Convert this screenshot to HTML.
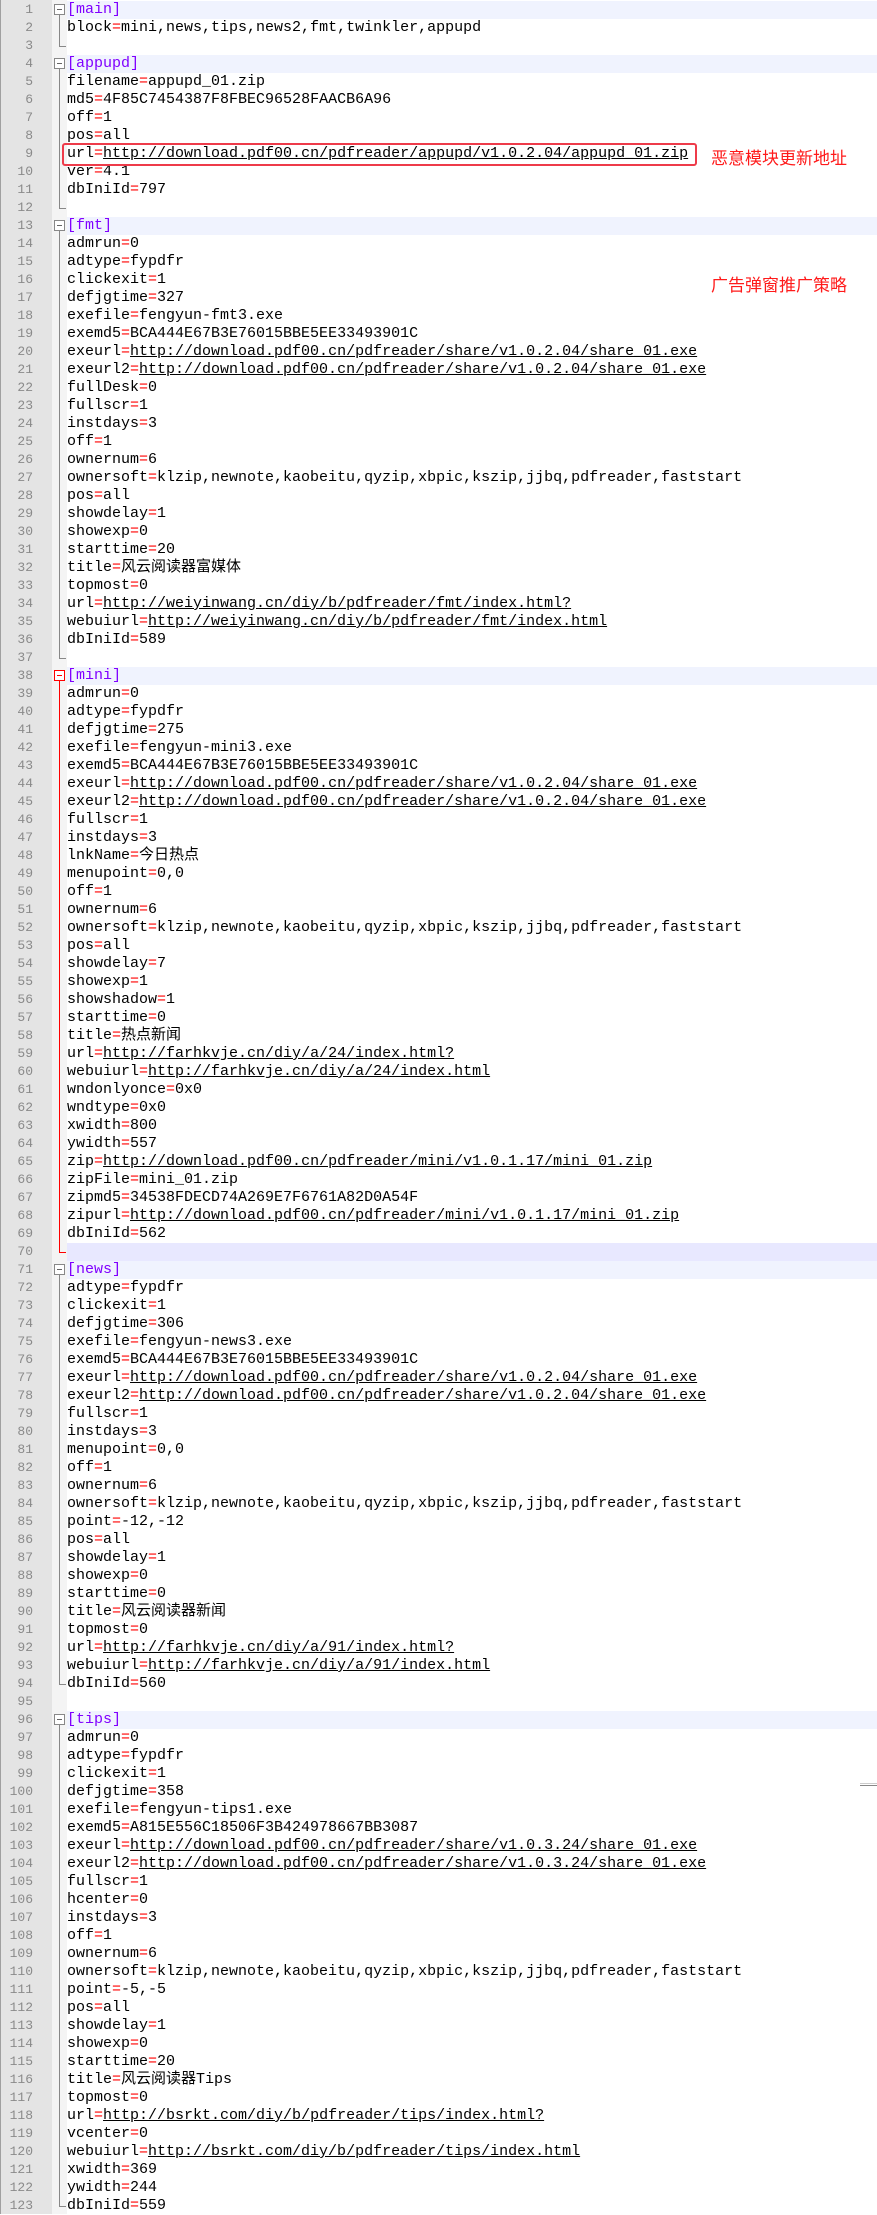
<!DOCTYPE html>
<html><head><meta charset="utf-8">
<style>
html,body{margin:0;padding:0;background:#fff;}
body{width:877px;height:2214px;position:relative;overflow:hidden;}
#gut{position:absolute;left:0;top:0;width:52px;height:2214px;background:#e4e4e4;border-left:1px solid #a0a0a0;box-sizing:border-box;}
#fold{position:absolute;left:52px;top:0;width:15px;height:2214px;background:#f4f4f4;}
#nums{position:absolute;left:0;top:1px;width:33px;margin:0;font:13px/18px "Liberation Mono",monospace;color:#8a8a8a;text-align:right;white-space:pre;}
#code{position:absolute;left:67px;top:1px;width:810px;}
.l{height:18px;line-height:18px;font:15px/18px "Liberation Mono","Noto Sans CJK SC",monospace;color:#000;white-space:pre;}
.h{background:#f0f3fe;color:#8000ff;}
.c{background:#e8e8ff;}
.l b{font-weight:normal;color:#f00;}
.l u{text-decoration:underline;}
.fb{position:absolute;left:54px;width:9px;height:9px;border:1px solid #888;background:#fff;}
.fb:after{content:"";position:absolute;left:2px;top:4px;width:5px;height:1px;background:#666;}
.fv{position:absolute;left:59px;width:1px;background:#888;}
.fe{position:absolute;left:59px;width:7px;height:1px;background:#888;}
.red .fb{border-color:#f00;} .red .fb:after{background:#f00;}
.red .fv,.red .fe{background:#f00;}
.note{position:absolute;left:711px;font:17px/20px "Noto Sans CJK SC","WenQuanYi Zen Hei",sans-serif;color:#ff1a1a;}
#box{position:absolute;left:62px;top:143px;width:631px;height:19px;border:2px solid #ee3b4a;border-radius:3px;}
</style></head><body>
<div id="gut"></div><div id="fold"></div>
<pre id="nums">1
2
3
4
5
6
7
8
9
10
11
12
13
14
15
16
17
18
19
20
21
22
23
24
25
26
27
28
29
30
31
32
33
34
35
36
37
38
39
40
41
42
43
44
45
46
47
48
49
50
51
52
53
54
55
56
57
58
59
60
61
62
63
64
65
66
67
68
69
70
71
72
73
74
75
76
77
78
79
80
81
82
83
84
85
86
87
88
89
90
91
92
93
94
95
96
97
98
99
100
101
102
103
104
105
106
107
108
109
110
111
112
113
114
115
116
117
118
119
120
121
122
123</pre>

<div id="code">
<div class="l h">[main]</div>
<div class="l">block<b>=</b>mini,news,tips,news2,fmt,twinkler,appupd</div>
<div class="l"></div>
<div class="l h">[appupd]</div>
<div class="l">filename<b>=</b>appupd_01.zip</div>
<div class="l">md5<b>=</b>4F85C7454387F8FBEC96528FAACB6A96</div>
<div class="l">off<b>=</b>1</div>
<div class="l">pos<b>=</b>all</div>
<div class="l">url<b>=</b><u>http://download.pdf00.cn/pdfreader/appupd/v1.0.2.04/appupd_01.zip</u></div>
<div class="l">ver<b>=</b>4.1</div>
<div class="l">dbIniId<b>=</b>797</div>
<div class="l"></div>
<div class="l h">[fmt]</div>
<div class="l">admrun<b>=</b>0</div>
<div class="l">adtype<b>=</b>fypdfr</div>
<div class="l">clickexit<b>=</b>1</div>
<div class="l">defjgtime<b>=</b>327</div>
<div class="l">exefile<b>=</b>fengyun-fmt3.exe</div>
<div class="l">exemd5<b>=</b>BCA444E67B3E76015BBE5EE33493901C</div>
<div class="l">exeurl<b>=</b><u>http://download.pdf00.cn/pdfreader/share/v1.0.2.04/share_01.exe</u></div>
<div class="l">exeurl2<b>=</b><u>http://download.pdf00.cn/pdfreader/share/v1.0.2.04/share_01.exe</u></div>
<div class="l">fullDesk<b>=</b>0</div>
<div class="l">fullscr<b>=</b>1</div>
<div class="l">instdays<b>=</b>3</div>
<div class="l">off<b>=</b>1</div>
<div class="l">ownernum<b>=</b>6</div>
<div class="l">ownersoft<b>=</b>klzip,newnote,kaobeitu,qyzip,xbpic,kszip,jjbq,pdfreader,faststart</div>
<div class="l">pos<b>=</b>all</div>
<div class="l">showdelay<b>=</b>1</div>
<div class="l">showexp<b>=</b>0</div>
<div class="l">starttime<b>=</b>20</div>
<div class="l">title<b>=</b>风云阅读器富媒体</div>
<div class="l">topmost<b>=</b>0</div>
<div class="l">url<b>=</b><u>http://weiyinwang.cn/diy/b/pdfreader/fmt/index.html?</u></div>
<div class="l">webuiurl<b>=</b><u>http://weiyinwang.cn/diy/b/pdfreader/fmt/index.html</u></div>
<div class="l">dbIniId<b>=</b>589</div>
<div class="l"></div>
<div class="l h">[mini]</div>
<div class="l">admrun<b>=</b>0</div>
<div class="l">adtype<b>=</b>fypdfr</div>
<div class="l">defjgtime<b>=</b>275</div>
<div class="l">exefile<b>=</b>fengyun-mini3.exe</div>
<div class="l">exemd5<b>=</b>BCA444E67B3E76015BBE5EE33493901C</div>
<div class="l">exeurl<b>=</b><u>http://download.pdf00.cn/pdfreader/share/v1.0.2.04/share_01.exe</u></div>
<div class="l">exeurl2<b>=</b><u>http://download.pdf00.cn/pdfreader/share/v1.0.2.04/share_01.exe</u></div>
<div class="l">fullscr<b>=</b>1</div>
<div class="l">instdays<b>=</b>3</div>
<div class="l">lnkName<b>=</b>今日热点</div>
<div class="l">menupoint<b>=</b>0,0</div>
<div class="l">off<b>=</b>1</div>
<div class="l">ownernum<b>=</b>6</div>
<div class="l">ownersoft<b>=</b>klzip,newnote,kaobeitu,qyzip,xbpic,kszip,jjbq,pdfreader,faststart</div>
<div class="l">pos<b>=</b>all</div>
<div class="l">showdelay<b>=</b>7</div>
<div class="l">showexp<b>=</b>1</div>
<div class="l">showshadow<b>=</b>1</div>
<div class="l">starttime<b>=</b>0</div>
<div class="l">title<b>=</b>热点新闻</div>
<div class="l">url<b>=</b><u>http://farhkvje.cn/diy/a/24/index.html?</u></div>
<div class="l">webuiurl<b>=</b><u>http://farhkvje.cn/diy/a/24/index.html</u></div>
<div class="l">wndonlyonce<b>=</b>0x0</div>
<div class="l">wndtype<b>=</b>0x0</div>
<div class="l">xwidth<b>=</b>800</div>
<div class="l">ywidth<b>=</b>557</div>
<div class="l">zip<b>=</b><u>http://download.pdf00.cn/pdfreader/mini/v1.0.1.17/mini_01.zip</u></div>
<div class="l">zipFile<b>=</b>mini_01.zip</div>
<div class="l">zipmd5<b>=</b>34538FDECD74A269E7F6761A82D0A54F</div>
<div class="l">zipurl<b>=</b><u>http://download.pdf00.cn/pdfreader/mini/v1.0.1.17/mini_01.zip</u></div>
<div class="l">dbIniId<b>=</b>562</div>
<div class="l c"></div>
<div class="l h">[news]</div>
<div class="l">adtype<b>=</b>fypdfr</div>
<div class="l">clickexit<b>=</b>1</div>
<div class="l">defjgtime<b>=</b>306</div>
<div class="l">exefile<b>=</b>fengyun-news3.exe</div>
<div class="l">exemd5<b>=</b>BCA444E67B3E76015BBE5EE33493901C</div>
<div class="l">exeurl<b>=</b><u>http://download.pdf00.cn/pdfreader/share/v1.0.2.04/share_01.exe</u></div>
<div class="l">exeurl2<b>=</b><u>http://download.pdf00.cn/pdfreader/share/v1.0.2.04/share_01.exe</u></div>
<div class="l">fullscr<b>=</b>1</div>
<div class="l">instdays<b>=</b>3</div>
<div class="l">menupoint<b>=</b>0,0</div>
<div class="l">off<b>=</b>1</div>
<div class="l">ownernum<b>=</b>6</div>
<div class="l">ownersoft<b>=</b>klzip,newnote,kaobeitu,qyzip,xbpic,kszip,jjbq,pdfreader,faststart</div>
<div class="l">point<b>=</b>-12,-12</div>
<div class="l">pos<b>=</b>all</div>
<div class="l">showdelay<b>=</b>1</div>
<div class="l">showexp<b>=</b>0</div>
<div class="l">starttime<b>=</b>0</div>
<div class="l">title<b>=</b>风云阅读器新闻</div>
<div class="l">topmost<b>=</b>0</div>
<div class="l">url<b>=</b><u>http://farhkvje.cn/diy/a/91/index.html?</u></div>
<div class="l">webuiurl<b>=</b><u>http://farhkvje.cn/diy/a/91/index.html</u></div>
<div class="l">dbIniId<b>=</b>560</div>
<div class="l"></div>
<div class="l h">[tips]</div>
<div class="l">admrun<b>=</b>0</div>
<div class="l">adtype<b>=</b>fypdfr</div>
<div class="l">clickexit<b>=</b>1</div>
<div class="l">defjgtime<b>=</b>358</div>
<div class="l">exefile<b>=</b>fengyun-tips1.exe</div>
<div class="l">exemd5<b>=</b>A815E556C18506F3B424978667BB3087</div>
<div class="l">exeurl<b>=</b><u>http://download.pdf00.cn/pdfreader/share/v1.0.3.24/share_01.exe</u></div>
<div class="l">exeurl2<b>=</b><u>http://download.pdf00.cn/pdfreader/share/v1.0.3.24/share_01.exe</u></div>
<div class="l">fullscr<b>=</b>1</div>
<div class="l">hcenter<b>=</b>0</div>
<div class="l">instdays<b>=</b>3</div>
<div class="l">off<b>=</b>1</div>
<div class="l">ownernum<b>=</b>6</div>
<div class="l">ownersoft<b>=</b>klzip,newnote,kaobeitu,qyzip,xbpic,kszip,jjbq,pdfreader,faststart</div>
<div class="l">point<b>=</b>-5,-5</div>
<div class="l">pos<b>=</b>all</div>
<div class="l">showdelay<b>=</b>1</div>
<div class="l">showexp<b>=</b>0</div>
<div class="l">starttime<b>=</b>20</div>
<div class="l">title<b>=</b>风云阅读器Tips</div>
<div class="l">topmost<b>=</b>0</div>
<div class="l">url<b>=</b><u>http://bsrkt.com/diy/b/pdfreader/tips/index.html?</u></div>
<div class="l">vcenter<b>=</b>0</div>
<div class="l">webuiurl<b>=</b><u>http://bsrkt.com/diy/b/pdfreader/tips/index.html</u></div>
<div class="l">xwidth<b>=</b>369</div>
<div class="l">ywidth<b>=</b>244</div>
<div class="l">dbIniId<b>=</b>559</div>
</div>

<div class="fb" style="top:4px"></div><div class="fv" style="top:15px;height:32px"></div><div class="fe" style="top:46px"></div>
<div class="fb" style="top:58px"></div><div class="fv" style="top:69px;height:140px"></div><div class="fe" style="top:208px"></div>
<div class="fb" style="top:220px"></div><div class="fv" style="top:231px;height:428px"></div><div class="fe" style="top:658px"></div>
<div class="red"><div class="fb" style="top:670px"></div><div class="fv" style="top:681px;height:572px"></div><div class="fe" style="top:1252px"></div></div>
<div class="fb" style="top:1264px"></div><div class="fv" style="top:1275px;height:410px"></div><div class="fe" style="top:1684px"></div>
<div class="fb" style="top:1714px"></div><div class="fv" style="top:1725px;height:482px"></div><div class="fe" style="top:2206px"></div>

<div id="box"></div>
<div class="note" style="top:147px">恶意模块更新地址</div>
<div class="note" style="top:274px">广告弹窗推广策略</div>
<div style="position:absolute;left:860px;top:1783px;width:17px;height:1px;background:#ccc"></div>
<div style="position:absolute;left:860px;top:1785px;width:17px;height:1px;background:#888"></div>
</body></html>
